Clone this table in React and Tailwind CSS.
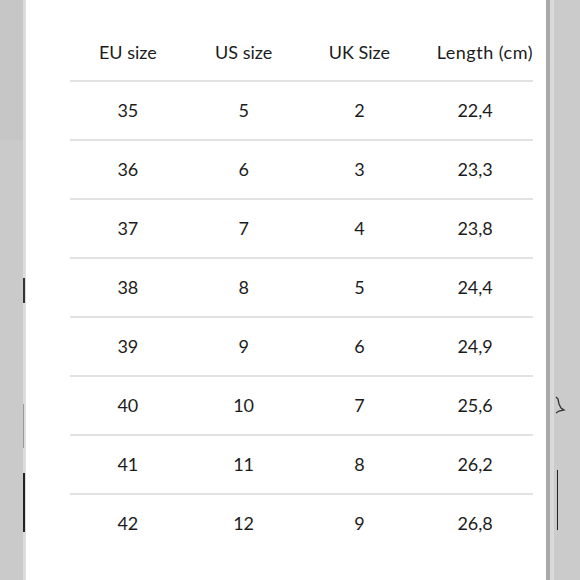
import React from "react";

const rows = [
  ["35", "5", "2", "22,4"],
  ["36", "6", "3", "23,3"],
  ["37", "7", "4", "23,8"],
  ["38", "8", "5", "24,4"],
  ["39", "9", "6", "24,9"],
  ["40", "10", "7", "25,6"],
  ["41", "11", "8", "26,2"],
  ["42", "12", "9", "26,8"],
];

// tiny squiggle on the right strip
const Bell = () => (
  <svg width="12" height="24" viewBox="0 0 12 24" fill="none" stroke="#333" strokeWidth="1.3">
    <path d="M1 1 L3 3 L4 8 L6 12 L9 14 L4 15 L1 17" />
  </svg>
);

export default function App() {
  return (
    <div className="flex w-[580px] h-[580px] overflow-hidden bg-white" style={{ fontFamily: "Lato, 'Noto Sans', sans-serif" }}>
      {/* left strip */}
      <div className="w-[26px] flex shrink-0">
        <div className="w-[23px] flex flex-col bg-[#cacaca]">
          <div className="h-[140px] bg-[#c6c6c6]" />
        </div>
        <div className="w-[3px] flex flex-col bg-[#dcdcdc]">
          <div className="h-[278px]" />
          <div className="h-[25px] w-[2px] bg-[#333]" />
          <div className="h-[101px]" />
          <div className="h-[44px] w-[1px] bg-[#999]" />
          <div className="h-[25px]" />
          <div className="h-[59px] w-[2px] bg-[#222]" />
        </div>
      </div>

      {/* main */}
      <div className="flex-1 pl-[44px] pr-[13px]">
        <div className="grid grid-cols-4 h-[80px] pt-[40px] text-[18px] leading-[24px] text-[#1c1c1c]">
          <div className="text-center">EU size</div>
          <div className="text-center">US size</div>
          <div className="text-center">UK Size</div>
          <div className="text-right tracking-[0.5px]">Length (cm)</div>
        </div>
        {rows.map((r, i) => (
          <div key={i} className="border-t-2 border-[#e2e2e2] grid grid-cols-4 h-[59px] items-center text-[18px] text-[#1c1c1c]">
            {r.map((c, j) => (
              <div key={j} className="text-center">{c}</div>
            ))}
          </div>
        ))}
      </div>

      {/* right strip */}
      <div className="w-[34px] flex shrink-0">
        <div className="w-[4px] bg-[#a9a9a9]" />
        <div className="w-[4px] bg-[#dadada]" />
        <div className="flex-1 bg-[#cbcbcb] flex flex-col">
          <div className="h-[396px]" />
          <div className="pl-[1px]"><Bell /></div>
          <div className="h-[50px]" />
          <div className="ml-[3px] h-[60px] w-[1px] bg-[#222]" />
        </div>
      </div>
    </div>
  );
}
